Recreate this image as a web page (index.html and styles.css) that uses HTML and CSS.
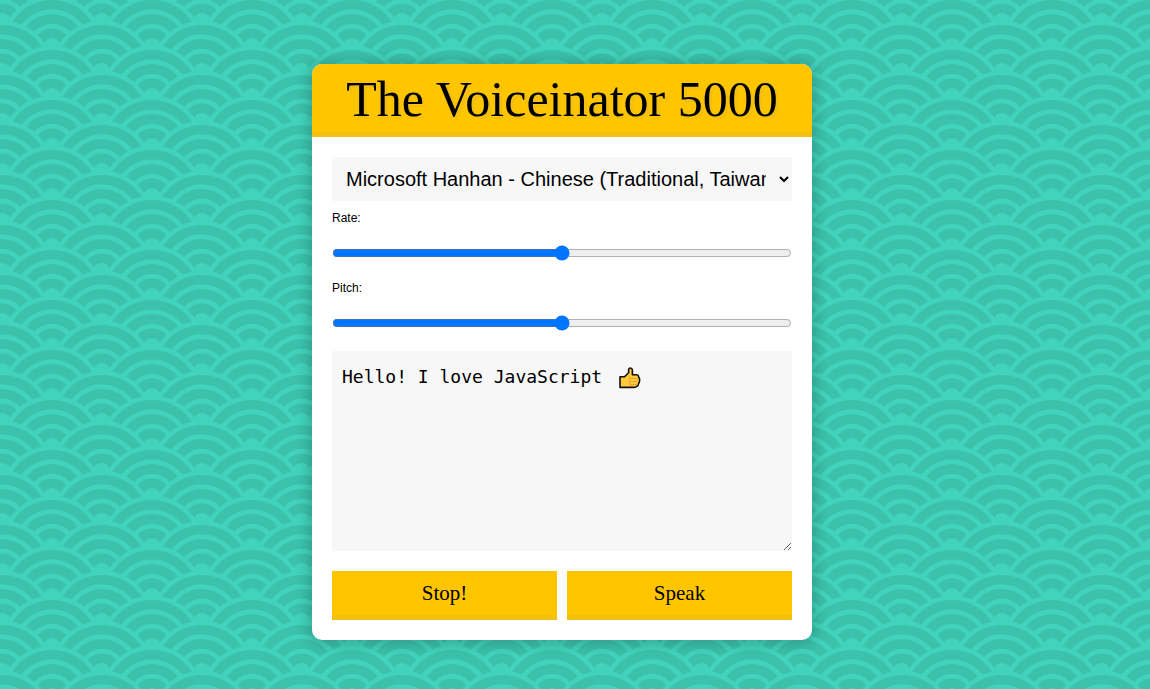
FILE: index.html
```html
<!DOCTYPE html>
<html lang="en">
<head>
  <meta charset="UTF-8">
  <title>The Voiceinator 5000</title>
  <link rel="stylesheet" href="styles.css">
</head>
<body>
  <main class="voiceinator">
    <h1 class="title">The Voiceinator 5000</h1>
    <select class="voice" name="voice" id="voices" aria-label="Voice">
      <option>Microsoft Hanhan - Chinese (Traditional, Taiwan) (zh-TW)</option>
    </select>
    <label class="label" for="rate">Rate:</label>
    <input class="range" id="rate" name="rate" type="range" min="0" max="3" value="1.5" step="0.1">
    <label class="label" for="pitch">Pitch:</label>
    <input class="range" id="pitch" name="pitch" type="range" min="0" max="2" value="1" step="0.1">
    <div class="message">
      <textarea class="text" name="text" aria-label="Text to speak">Hello! I love JavaScript</textarea>
      <svg class="thumb" viewBox="0 0 22 22" role="img" aria-label="Thumbs up">
        <path d="M1 9.8H5.5L9.6 5.8V3Q9.8 1 11.4 1T13.4 3V7.8H17.8Q19.6 8 19.8 10.2Q20.9 11.5 20.6 13.5Q20.5 15.5 19.6 16.5Q19.4 18.6 18 19.2Q17 20.4 15 20.4H1Z" fill="#ffc83d" stroke="#111" stroke-width="1.6" stroke-linejoin="round"/>
        <path d="M11.5 11.5H19M11.5 14.5H19.5M11.5 17.5H18.5M10.8 9.5V19" fill="none" stroke="#e5a52f" stroke-width="1"/>
      </svg>
    </div>
    <div class="actions">
      <button class="button" id="stop" type="button">Stop!</button>
      <button class="button" id="speak" type="button">Speak</button>
    </div>
  </main>
</body>
</html>
```
FILE: styles.css
```css
*,
*::before,
*::after {
  box-sizing: border-box;
}

html {
  min-height: 100%;
  background: #3bc1ac url("data:image/svg+xml,%3Csvg xmlns='http://www.w3.org/2000/svg' xmlns:xlink='http://www.w3.org/1999/xlink' width='100' height='50'%3E%3Cdefs%3E%3Cg id='f'%3E%3Ccircle r='51.4' fill='%2342d3bc'/%3E%3Ccircle r='47' fill='%233bc1ac'/%3E%3Ccircle r='37.7' fill='%2342d3bc'/%3E%3Ccircle r='33' fill='%233bc1ac'/%3E%3Ccircle r='23.3' fill='%2342d3bc'/%3E%3Ccircle r='18.6' fill='%233bc1ac'/%3E%3Ccircle r='9' fill='%2342d3bc'/%3E%3C/g%3E%3Cg id='a'%3E%3Cuse xlink:href='%23f' x='-48'/%3E%3Cuse xlink:href='%23f' x='52'/%3E%3Cuse xlink:href='%23f' x='152'/%3E%3C/g%3E%3Cg id='b'%3E%3Cuse xlink:href='%23f' x='2'/%3E%3Cuse xlink:href='%23f' x='102'/%3E%3C/g%3E%3C/defs%3E%3Cuse xlink:href='%23a' y='-3'/%3E%3Cuse xlink:href='%23b' y='22'/%3E%3Cuse xlink:href='%23a' y='47'/%3E%3Cuse xlink:href='%23b' y='72'/%3E%3Cuse xlink:href='%23a' y='97'/%3E%3C/svg%3E");
  font-family: "Liberation Sans", Arial, sans-serif;
  font-size: 12px;
}

body {
  margin: 0;
  padding: 64px 26px 48px 0;
}

.voiceinator {
  max-width: 500px;
  margin: 0 auto;
  padding: 0 20px 20px;
  overflow: hidden;
  border-radius: 10px;
  background: #fff;
  box-shadow: 0 1px 14px 3px rgba(0, 0, 0, 0.2);
}

.title {
  margin: 0 -20px 20px;
  padding: 6px 5px 4px;
  border-bottom: 5px solid #f3c010;
  background: #ffc600;
  color: #000;
  font-family: "Liberation Serif", "Times New Roman", serif;
  font-size: 50px;
  font-weight: 400;
  line-height: 58px;
  text-align: center;
  text-shadow: 3px 3px 0 #f3c010;
}

.voice {
  display: block;
  width: 100%;
  height: 44px;
  padding: 10px;
  border: 0;
  border-radius: 0;
  outline: 0;
  background: #f7f7f7;
  color: #000;
  font-family: inherit;
  font-size: 20px;
}

.label {
  display: block;
  margin-top: 10px;
  line-height: 14px;
}

.range {
  display: block;
  width: 100%;
  height: 16px;
  margin: 20px 0;
}

.message {
  position: relative;
}

.text {
  display: block;
  width: 100%;
  height: 200px;
  padding: 15px 10px;
  border: 0;
  outline: 0;
  background: #f7f7f7;
  color: #000;
  font-family: "DejaVu Sans Mono", monospace;
  font-size: 18px;
  line-height: 22px;
  resize: vertical;
}

.thumb {
  position: absolute;
  top: 16px;
  left: 287px;
  width: 22px;
  height: 22px;
}

.actions {
  display: flex;
  gap: 10px;
  margin-top: 20px;
}

.button {
  flex: 1;
  padding: 10px;
  border: 0;
  border-bottom: 5px solid #f3c010;
  background: #ffc600;
  color: #000;
  font-family: "Liberation Serif", serif;
  font-size: 21px;
  line-height: 24px;
}
```
